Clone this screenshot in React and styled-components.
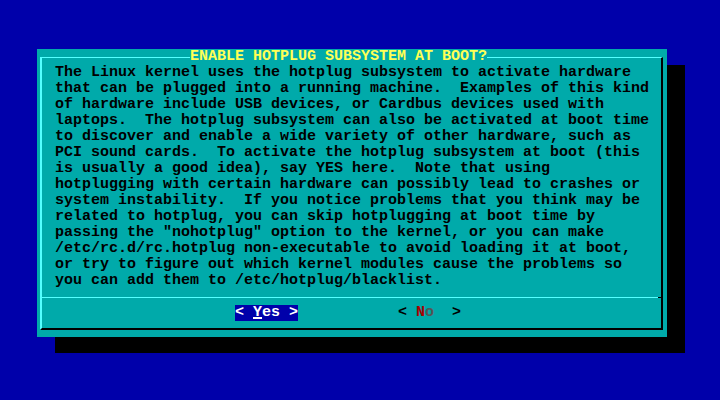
import React from "react";
import styled, { createGlobalStyle } from "styled-components";

const lines = [
    "The Linux kernel uses the hotplug subsystem to activate hardware",
    "that can be plugged into a running machine.  Examples of this kind",
    "of hardware include USB devices, or Cardbus devices used with",
    "laptops.  The hotplug subsystem can also be activated at boot time",
    "to discover and enable a wide variety of other hardware, such as",
    "PCI sound cards.  To activate the hotplug subsystem at boot (this",
    "is usually a good idea), say YES here.  Note that using",
    "hotplugging with certain hardware can possibly lead to crashes or",
    "system instability.  If you notice problems that you think may be",
    "related to hotplug, you can skip hotplugging at boot time by",
    "passing the \"nohotplug\" option to the kernel, or you can make",
    "/etc/rc.d/rc.hotplug non-executable to avoid loading it at boot,",
    "or try to figure out which kernel modules cause the problems so",
    "you can add them to /etc/hotplug/blacklist.",
];

const App = () => {
    return (
        <>
            <GlobalStyle />
            <Screen>
                <Dialog>
                    <Frame>
                        <TitleRow>
                            <Title>ENABLE HOTPLUG SUBSYSTEM AT BOOT?</Title>
                        </TitleRow>
                        <Body>
                            {lines.map((line, i) => (
                                <Line key={i}>{line}</Line>
                            ))}
                        </Body>
                        <Separator />
                        <ButtonRow>
                            <Button $active>
                                {"< "}<Hotkey $active>Y</Hotkey>es{" >"}
                            </Button>
                            <Button>
                                {"< "}<Hotkey>N</Hotkey><Rest>o</Rest>{"  >"}
                            </Button>
                        </ButtonRow>
                    </Frame>
                </Dialog>
            </Screen>
        </>
    );
};

// 스타일
const GlobalStyle = createGlobalStyle`
    html, body {
        margin: 0;
        padding: 0;
        background: #0000aa;
    }
    body {
        width: 720px;
        height: 400px;
        overflow: hidden;
        font-family: "Liberation Mono", "DejaVu Sans Mono", monospace;
    }
`;

const Screen = styled.div`
    box-sizing: border-box;
    width: 720px;
    height: 400px;
    padding: 49px 0 0 37px;
    background: #0000aa;
`;

const Dialog = styled.div`
    box-sizing: border-box;
    width: 630px;
    height: 288px;
    padding: 8px 4px 7px 3px;
    background: #00aaaa;
    box-shadow: 18px 16px 0 #000;
`;

const Frame = styled.div`
    box-sizing: border-box;
    height: 100%;
    display: flex;
    flex-direction: column;
    border-top: 1px solid #55ffff;
    border-left: 2px solid #55ffff;
    border-right: 2px solid #000;
    border-bottom: 2px solid #000;
`;

const TitleRow = styled.div`
    display: flex;
    height: 16px;
    margin-top: -9px;
    padding-left: 148px;
`;

const Title = styled.span`
    background: #00aaaa;
    color: #ffff55;
    font-size: 15px;
    line-height: 16px;
    font-weight: bold;
    white-space: pre;
`;

const Body = styled.div`
    height: 224px;
    margin-bottom: 8px;
    padding-left: 13px;
    color: #000;
    font-size: 15px;
    line-height: 16px;
    font-weight: bold;
`;

const Line = styled.div`
    height: 16px;
    white-space: pre;
`;

const Separator = styled.div`
    height: 1px;
    background: linear-gradient(to right, #55ffff calc(100% - 3px), #000 0);
`;

const ButtonRow = styled.div`
    display: flex;
    gap: 100px;
    padding: 7px 0 7px 193px;
`;

const Button = styled.span`
    height: 16px;
    font-size: 15px;
    line-height: 16px;
    font-weight: bold;
    white-space: pre;
    background: ${props => (props.$active ? "#0000aa" : "transparent")};
    color: ${props => (props.$active ? "#ffffff" : "#000000")};
`;

const Hotkey = styled.span`
    color: ${props => (props.$active ? "#ffffff" : "#aa0000")};
    text-decoration: ${props => (props.$active ? "underline" : "none")};
    text-decoration-thickness: 2px;
    text-underline-offset: 1px;
`;

const Rest = styled.span`
    color: #555555;
`;

export default App;
